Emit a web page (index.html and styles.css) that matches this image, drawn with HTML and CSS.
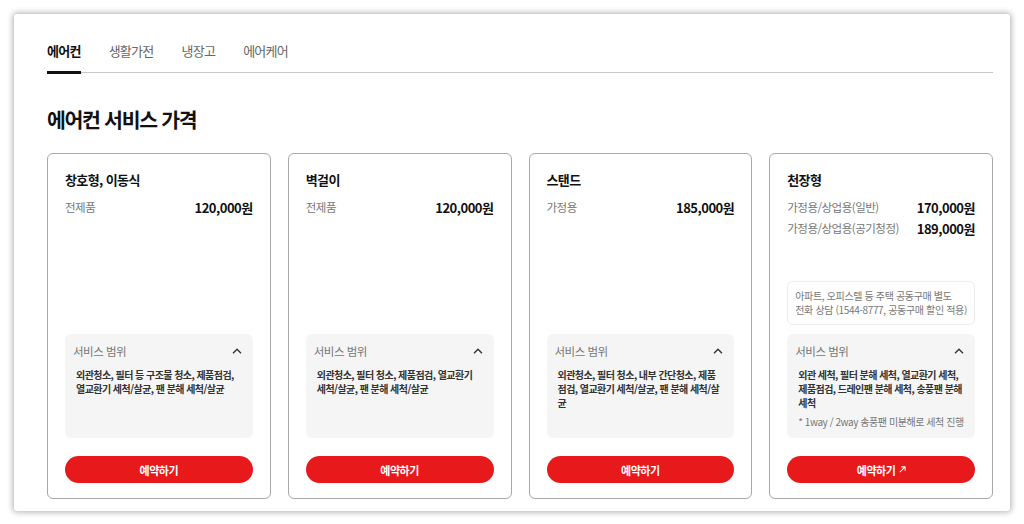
FILE: index.html
```html
<!DOCTYPE html>
<html lang="ko">
<head>
<meta charset="utf-8">
<title>에어컨 서비스 가격</title>
<link rel="stylesheet" href="styles.css">
</head>
<body>
<div class="frame">
  <main class="panel">
    <nav class="tabs">
      <a class="tab active">에어컨</a>
      <a class="tab">생활가전</a>
      <a class="tab">냉장고</a>
      <a class="tab">에어케어</a>
    </nav>
    <h1 class="title">에어컨 서비스 가격</h1>
    <div class="cards">
      <section class="card">
        <h2 class="card-title">창호형, 이동식</h2>
        <div class="prices">
          <div class="price-row"><span class="label">전제품</span><span class="price">120,000원</span></div>
        </div>
        <div class="bottom">
          <div class="scope">
            <div class="scope-head"><span>서비스 범위</span><svg class="chev" viewBox="0 0 10 6" width="10" height="6"><path d="M1 5.2 L5 1.2 L9 5.2" fill="none" stroke="#333" stroke-width="1.4"/></svg></div>
            <p class="scope-text">외관청소, 필터 등 구조물 청소, 제품점검, 열교환기 세척/살균, 팬 분해 세척/살균</p>
          </div>
          <button class="btn">예약하기</button>
        </div>
      </section>
      <section class="card">
        <h2 class="card-title">벽걸이</h2>
        <div class="prices">
          <div class="price-row"><span class="label">전제품</span><span class="price">120,000원</span></div>
        </div>
        <div class="bottom">
          <div class="scope">
            <div class="scope-head"><span>서비스 범위</span><svg class="chev" viewBox="0 0 10 6" width="10" height="6"><path d="M1 5.2 L5 1.2 L9 5.2" fill="none" stroke="#333" stroke-width="1.4"/></svg></div>
            <p class="scope-text">외관청소, 필터 청소, 제품점검, 열교환기 세척/살균, 팬 분해 세척/살균</p>
          </div>
          <button class="btn">예약하기</button>
        </div>
      </section>
      <section class="card">
        <h2 class="card-title">스탠드</h2>
        <div class="prices">
          <div class="price-row"><span class="label">가정용</span><span class="price">185,000원</span></div>
        </div>
        <div class="bottom">
          <div class="scope">
            <div class="scope-head"><span>서비스 범위</span><svg class="chev" viewBox="0 0 10 6" width="10" height="6"><path d="M1 5.2 L5 1.2 L9 5.2" fill="none" stroke="#333" stroke-width="1.4"/></svg></div>
            <p class="scope-text">외관청소, 필터 청소, 내부 간단청소, 제품점검, 열교환기 세척/살균, 팬 분해 세척/살균</p>
          </div>
          <button class="btn">예약하기</button>
        </div>
      </section>
      <section class="card">
        <h2 class="card-title">천장형</h2>
        <div class="prices">
          <div class="price-row"><span class="label">가정용/상업용(일반)</span><span class="price">170,000원</span></div>
          <div class="price-row"><span class="label">가정용/상업용(공기청정)</span><span class="price">189,000원</span></div>
        </div>
        <div class="bottom">
          <p class="notice">아파트, 오피스텔 등 주택 공동구매 별도<br>전화 상담 (1544-8777, 공동구매 할인 적용)</p>
          <div class="scope">
            <div class="scope-head"><span>서비스 범위</span><svg class="chev" viewBox="0 0 10 6" width="10" height="6"><path d="M1 5.2 L5 1.2 L9 5.2" fill="none" stroke="#333" stroke-width="1.4"/></svg></div>
            <p class="scope-text">외관 세척, 필터 분해 세척, 열교환기 세척, 제품점검, 드레인팬 분해 세척, 송풍팬 분해 세척</p>
            <p class="scope-note">* 1way / 2way 송풍팬 미분해로 세척 진행</p>
          </div>
          <button class="btn">예약하기 <svg class="arrow" viewBox="0 0 8 8" width="7" height="7"><path d="M1 7 L7 1 M2.5 1 H7 V5.5" fill="none" stroke="#fff" stroke-width="1.2"/></svg></button>
        </div>
      </section>
    </div>
  </main>
</div>
</body>
</html>
```

FILE: styles.css
```css
* { box-sizing: border-box; }
html, body { margin: 0; padding: 0; background: #fff; }
body {
  font-family: "Noto Sans CJK KR", "Noto Sans", sans-serif;
  color: #111;
  width: 1024px;
  height: 524px;
  overflow: hidden;
}
.frame { padding: 14px 14px 0 14px; }
.panel {
  width: 996px;
  height: 497px;
  background: #fff;
  border-radius: 3px;
  box-shadow: 0 0 6px 1px rgba(0,0,0,0.32);
  padding: 27px 17px 0 33px;
}
.tabs {
  display: flex;
  gap: 28px;
  border-bottom: 1px solid #c8c8c8;
}
.tab {
  position: relative;
  font-size: 13px;
  line-height: 20px;
  letter-spacing: -0.75px;
  color: #666;
  padding-bottom: 11px;
}
.tab.active { color: #111; font-weight: 700; }
.tab.active::after {
  content: "";
  position: absolute;
  left: 0; right: 0; bottom: -2px;
  height: 3px;
  background: #111;
}
.title {
  margin: 33px 0 21px;
  font-size: 20.5px;
  line-height: 26px;
  font-weight: 700;
  letter-spacing: -1.3px;
}
.cards {
  display: grid;
  grid-template-columns: repeat(4, 1fr);
  gap: 17px;
}
.card {
  min-height: 346px;
  border: 1px solid #a8a8a8;
  border-radius: 6px;
  padding: 16px 17px 15px;
  display: flex;
  flex-direction: column;
}
.card-title {
  margin: 0;
  font-size: 13px;
  line-height: 20px;
  font-weight: 700;
  letter-spacing: -0.6px;
}
.prices {
  margin-top: 7px;
  display: flex;
  flex-direction: column;
  gap: 1px;
}
.price-row {
  display: flex;
  justify-content: space-between;
  align-items: center;
  height: 20px;
}
.label {
  font-size: 11.5px;
  color: #777;
  letter-spacing: -0.5px;
}
.price {
  font-size: 13px;
  font-weight: 700;
  letter-spacing: -0.5px;
}
.bottom {
  margin-top: auto;
  display: flex;
  flex-direction: column;
}
.notice {
  margin: 0 0 9px;
  border: 1px solid #ececec;
  border-radius: 6px;
  padding: 7px 7px;
  font-size: 10px;
  line-height: 14px;
  color: #777;
  letter-spacing: -0.35px;
  white-space: nowrap;
}
.scope {
  min-height: 104px;
  background: #f5f5f5;
  border-radius: 6px;
  padding: 8px 11px 9px 8px;
}
.scope-head {
  display: flex;
  justify-content: space-between;
  align-items: center;
  height: 18px;
  font-size: 11.5px;
  color: #777;
  letter-spacing: -0.5px;
}
.chev { display: block; }
.scope-text {
  margin: 8px 0 0;
  padding-left: 3px;
  font-size: 10px;
  line-height: 14px;
  font-weight: 700;
  color: #333;
  letter-spacing: -0.55px;
}
.scope-note {
  margin: 5px 0 0;
  padding-left: 3px;
  font-size: 10px;
  line-height: 14px;
  color: #777;
  letter-spacing: -0.45px;
  white-space: nowrap;
}
.btn {
  margin-top: 18px;
  height: 27px;
  border: none;
  border-radius: 14px;
  background: #e8191b;
  color: #fff;
  font-family: inherit;
  font-size: 11px;
  font-weight: 700;
  letter-spacing: -0.4px;
  display: flex;
  align-items: center;
  justify-content: center;
  gap: 3px;
}
.arrow { display: block; }
```
